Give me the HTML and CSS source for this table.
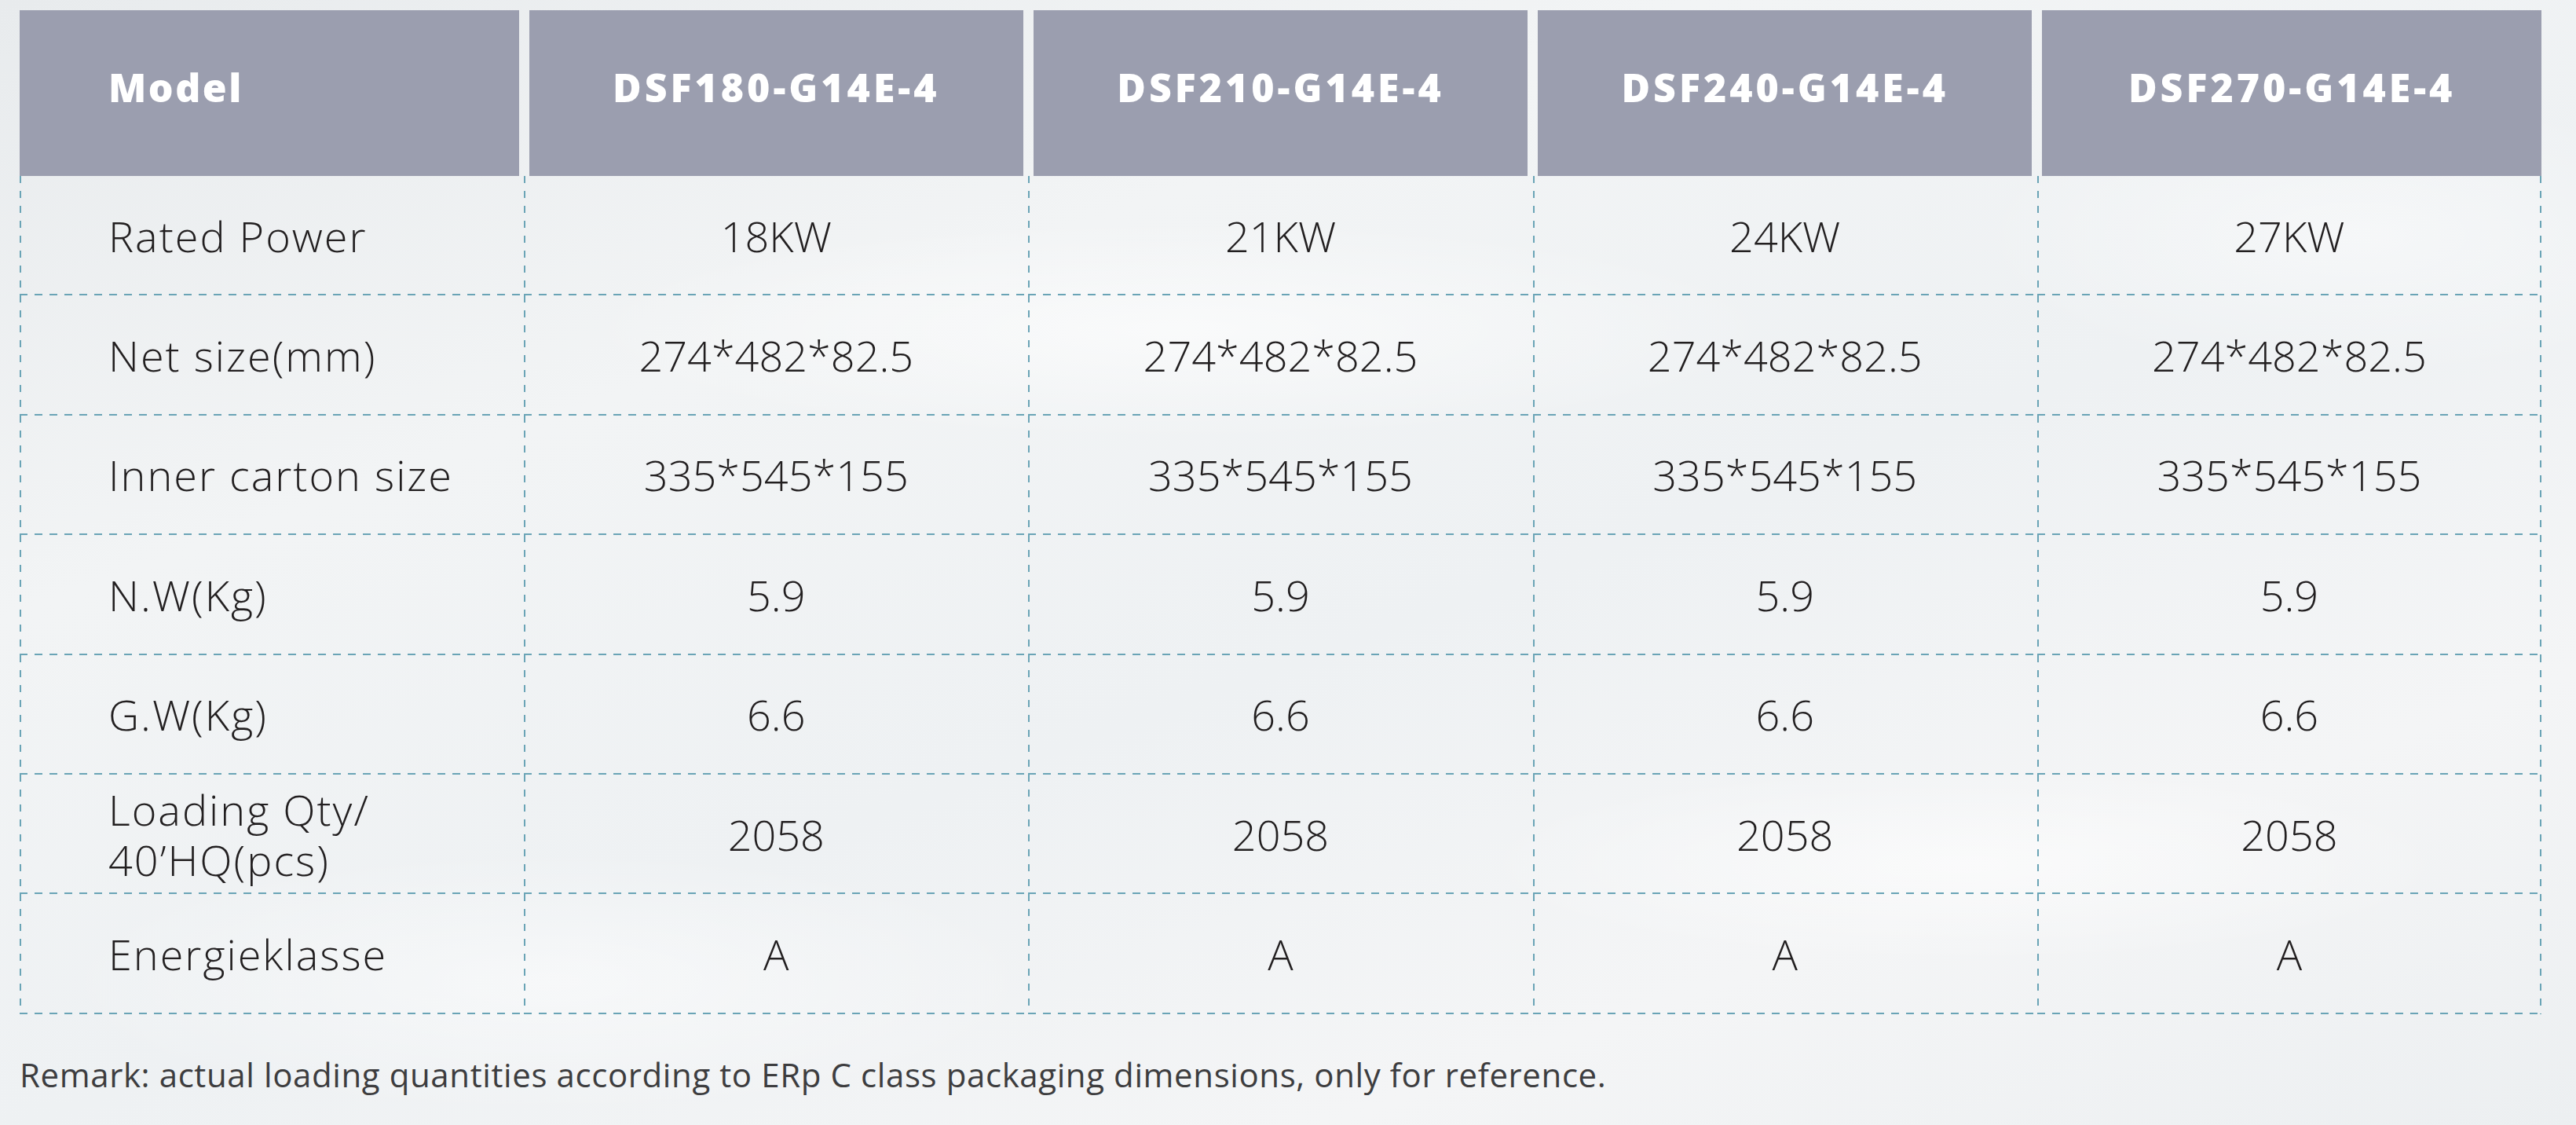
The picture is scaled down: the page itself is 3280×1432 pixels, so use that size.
FILE: index.html
```html
<!DOCTYPE html>
<html lang="en">
<head>
<meta charset="utf-8">
<title>DSF G14E-4 specifications</title>
<link rel="stylesheet" href="styles.css">
</head>
<body>
<main class="page">
  <div class="spec-table">
    <div class="th th-first">Model</div>
    <div class="th">DSF180-G14E-4</div>
    <div class="th">DSF210-G14E-4</div>
    <div class="th">DSF240-G14E-4</div>
    <div class="th th-last">DSF270-G14E-4</div>

    <div class="td td-label">Rated Power</div>
    <div class="td">18KW</div>
    <div class="td">21KW</div>
    <div class="td">24KW</div>
    <div class="td td-last">27KW</div>

    <div class="td td-label">Net size(mm)</div>
    <div class="td">274*482*82.5</div>
    <div class="td">274*482*82.5</div>
    <div class="td">274*482*82.5</div>
    <div class="td td-last">274*482*82.5</div>

    <div class="td td-label">Inner carton size</div>
    <div class="td">335*545*155</div>
    <div class="td">335*545*155</div>
    <div class="td">335*545*155</div>
    <div class="td td-last">335*545*155</div>

    <div class="td td-label">N.W(Kg)</div>
    <div class="td">5.9</div>
    <div class="td">5.9</div>
    <div class="td">5.9</div>
    <div class="td td-last">5.9</div>

    <div class="td td-label">G.W(Kg)</div>
    <div class="td">6.6</div>
    <div class="td">6.6</div>
    <div class="td">6.6</div>
    <div class="td td-last">6.6</div>

    <div class="td td-label td-multi">Loading Qty/<br>40’HQ(pcs)</div>
    <div class="td">2058</div>
    <div class="td">2058</div>
    <div class="td">2058</div>
    <div class="td td-last">2058</div>

    <div class="td td-label">Energieklasse</div>
    <div class="td">A</div>
    <div class="td">A</div>
    <div class="td">A</div>
    <div class="td td-last">A</div>
  </div>
  <p class="remark">Remark: actual loading quantities according to ERp C class packaging dimensions, only for reference.</p>
</main>
</body>
</html>
```

FILE: styles.css
```css
html, body {
  margin: 0;
  padding: 0;
}

body {
  width: 3280px;
  height: 1432px;
  overflow: hidden;
  font-family: "Open Sans", "Liberation Sans", sans-serif;
  color: #221f20;
  background-color: #f0f2f4;
  background-image:
    radial-gradient(ellipse 1100px 200px at 1500px 420px, rgba(255,255,255,0.6), rgba(255,255,255,0) 70%),
    radial-gradient(ellipse 900px 180px at 2500px 1100px, rgba(255,255,255,0.55), rgba(255,255,255,0) 70%),
    radial-gradient(ellipse 900px 240px at 700px 1250px, rgba(255,255,255,0.5), rgba(255,255,255,0) 70%),
    radial-gradient(ellipse 700px 260px at 3000px 300px, rgba(255,255,255,0.45), rgba(255,255,255,0) 70%),
    linear-gradient(160deg, #e8ebed 0%, #f2f4f5 30%, #eef1f3 55%, #f4f5f6 78%, #eceff1 100%);
}

.page {
  padding: 13px 44px 0 25px;
}

.spec-table {
  display: grid;
  grid-template-columns: repeat(5, 1fr);
  grid-template-rows: 211px repeat(7, 152.4px);
  width: 3211px;
}

.th {
  margin: 0 6.5px;
  background: #9b9eaf;
  color: #ffffff;
  font-weight: 800;
  font-size: 50px;
  letter-spacing: 4px;
  display: flex;
  align-items: center;
  justify-content: center;
  padding-bottom: 16px;
  box-sizing: border-box;
}

.th-first {
  margin-left: 0;
  justify-content: flex-start;
  padding-left: 113px;
  letter-spacing: 2.5px;
}

.th-last {
  margin-right: 0;
}

.td {
  display: flex;
  align-items: center;
  justify-content: center;
  font-size: 54px;
  font-weight: 300;
  line-height: 63px;
  background-image:
    repeating-linear-gradient(to right, #6aa4b6 0 10px, transparent 10px 19px),
    repeating-linear-gradient(to bottom, #6aa4b6 0 9px, transparent 9px 19px);
  background-size: 100% 2px, 2px 100%;
  background-position: left bottom, left top;
  background-repeat: no-repeat;
}

.td-label {
  justify-content: flex-start;
  padding-left: 113px;
  letter-spacing: 2px;
}

.td-multi {
  line-height: 64px;
}

.td-last {
  background-image:
    repeating-linear-gradient(to right, #6aa4b6 0 10px, transparent 10px 19px),
    repeating-linear-gradient(to bottom, #6aa4b6 0 9px, transparent 9px 19px),
    repeating-linear-gradient(to bottom, #6aa4b6 0 9px, transparent 9px 19px);
  background-size: 100% 2px, 2px 100%, 2px 100%;
  background-position: left bottom, left top, right top;
}

.remark {
  margin: 48px 0 0 0;
  font-family: "Open Sans", "Liberation Sans", sans-serif;
  font-size: 42px;
  letter-spacing: 0.6px;
  color: #3d3d3f;
}
```
